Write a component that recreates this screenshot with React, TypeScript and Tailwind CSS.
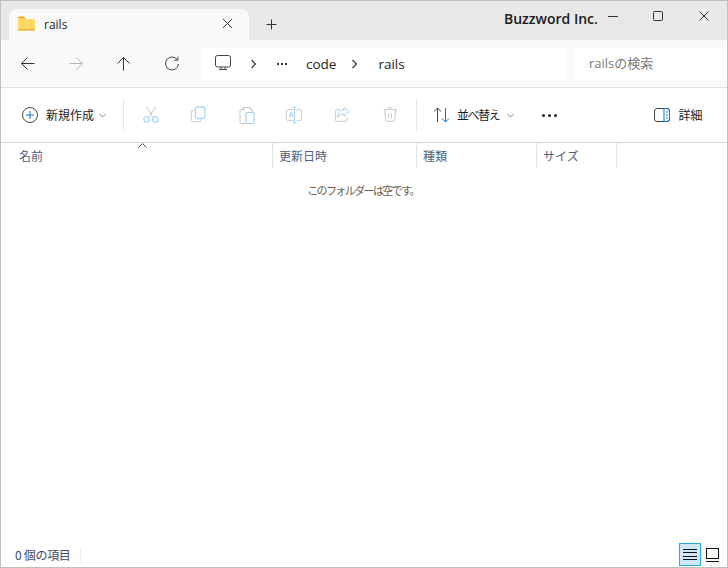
import type { ReactNode } from "react";

const font = "font-['Open_Sans','Noto_Sans_CJK_JP',sans-serif]";
const jp = "font-['Noto_Sans_CJK_JP',sans-serif]";
const GRAY = "#c4c4c4";
const BLUE = "#9fcff5";

function Svg({ size = 20, children }: { size?: number; children: ReactNode }) {
  return (
    <svg width={size} height={size} viewBox="0 0 20 20" fill="none" strokeWidth="1" className="shrink-0">
      {children}
    </svg>
  );
}

function NavArrow({ rotate, color }: { rotate: string; color: string }) {
  return (
    <div className={`flex h-5 w-5 items-center justify-center ${rotate}`}>
      <svg width="20" height="19" viewBox="0 0 20 19" fill="none" className="shrink-0">
        <path d="M3.500 9.500h13M9.500 3.500l-6 6 6 6" stroke={color} strokeWidth="1" />
      </svg>
    </div>
  );
}

function Chevron() {
  return (
    <svg width="8" height="10" viewBox="0 0 8 10" fill="none" className="shrink-0">
      <path d="M1.500 1l4 4-4 4" stroke="#333" strokeWidth="1.100" />
    </svg>
  );
}

function SmallDown() {
  return (
    <svg width="7" height="5" viewBox="0 0 7 5" fill="none" className="shrink-0">
      <path d="M.5 1l3 3 3-3" stroke="#888" />
    </svg>
  );
}

function Cut() {
  return (
    <Svg size={18}>
      <path d="M5 1l7 11M15 1L8 12" stroke={GRAY} strokeWidth="1.100" />
      <circle cx="5" cy="15" r="3" stroke={BLUE} strokeWidth="1.200" />
      <circle cx="15" cy="15" r="3" stroke={BLUE} strokeWidth="1.200" />
    </Svg>
  );
}

function Copy() {
  return (
    <Svg size={18}>
      <path d="M5 5H3.500A2 2 0 0 0 1.500 7v8a2.500 2.500 0 0 0 2.500 2.500h6a2 2 0 0 0 2-2V15" stroke={GRAY} />
      <rect x="6" y="1" width="10.500" height="13" rx="2.500" stroke={BLUE} strokeWidth="1.200" />
    </Svg>
  );
}

function Paste() {
  return (
    <Svg size={20}>
      <path d="M8 4.500H4.500a1.500 1.500 0 0 0-1.500 1.500v11a1.500 1.500 0 0 0 1.500 1.500h4M6 4V2.500h7V4M13 4.500h1a1.500 1.500 0 0 1 1.500 1.500v1" stroke={GRAY} />
      <rect x="9" y="7.500" width="8" height="11" rx="1.500" stroke={BLUE} strokeWidth="1.200" />
    </Svg>
  );
}

function Rename() {
  return (
    <Svg size={18}>
      <path d="M9 4H3.500A2 2 0 0 0 1.500 6v8a2 2 0 0 0 2 2H9M13 4h3.500a2 2 0 0 1 2 2v8a2 2 0 0 1-2 2H13" stroke={GRAY} />
      <path d="M8.500 1.500h4M8.500 18.500h4M10.500 1.500v17" stroke={BLUE} strokeWidth="1.100" />
      <path d="M4.500 13l2.500-6.500L9 12M5.500 11h3" stroke={BLUE} strokeWidth="1.100" />
    </Svg>
  );
}

function Share() {
  return (
    <Svg size={18}>
      <path d="M7 4H3.500A2 2 0 0 0 1.500 6v9a2 2 0 0 0 2 2h9a2 2 0 0 0 2-2v-2" stroke={GRAY} />
      <path d="M11 1.500l6 5-6 5V9C8 9 5.500 10 4 13c0-5 3-8.500 7-8.500z" stroke={BLUE} strokeWidth="1.100" />
    </Svg>
  );
}

function Trash() {
  return (
    <Svg size={18}>
      <path d="M1.500 4h15M7 4V2.500a1 1 0 0 1 1-1h2a1 1 0 0 1 1 1V4M3 4l1 11.500a2 2 0 0 0 2 1.500h6a2 2 0 0 0 2-1.500L15 4M7.500 8v5.500M10.500 8v5.500" stroke={GRAY} />
    </Svg>
  );
}

function Separator() {
  return <div className="h-[32px] w-px bg-[#e8e8e8]" />;
}

function Column({ width, label }: { width: string; label: string }) {
  return (
    <div className={`flex h-[25px] items-center border-r border-[#e2e2e2] pl-[6px] ${width}`}>
      <span className={`text-[12px] text-[#4c607a] ${jp}`}>{label}</span>
    </div>
  );
}

export default function App() {
  return (
    <div className={`flex h-[568px] w-[728px] flex-col overflow-hidden border border-[#bfbfbf] bg-white ${font}`}>
      {/* title bar */}
      <div className="flex h-[39px] shrink-0 items-end bg-[#e8e8e8] pl-[8px]">
        <div className="flex h-[31px] w-[240px] items-center rounded-t-[8px] bg-[#f9f9f9] pl-[9px]">
          <svg width="17" height="15" viewBox="0 0 17 15" className="shrink-0 -translate-y-px">
            <path d="M0 2a1.500 1.500 0 0 1 1.500-1.500h4.500l2 2H0z" fill="#eba800" />
            <rect x="0" y="3" width="17" height="11.500" rx="1.500" fill="#ffd966" />
            <rect x="0" y="13" width="17" height="1.500" rx=".7" fill="#e9b437" />
          </svg>
          <span className="ml-[9px] text-[12px] text-[#1b1b1b]">rails</span>
          <svg width="11" height="11" viewBox="0 0 11 11" className="ml-[155px] shrink-0 -translate-y-px" fill="none">
            <path d="M1 1l9 9M10 1l-9 9" stroke="#333" strokeWidth="1" />
          </svg>
        </div>
        <svg width="11" height="11" viewBox="0 0 11 11" className="mb-[10px] ml-[17px] shrink-0" fill="none">
          <path d="M5.500 .5v10M.5 5.500h10" stroke="#333" strokeWidth="1" />
        </svg>
        <span className="mb-[11px] ml-[227px] text-[14px] leading-[20px] font-semibold whitespace-nowrap text-[#1b1b1b]">
          Buzzword Inc.
        </span>
        <div className="mb-[19px] ml-[10px] flex items-center">
          <div className="h-px w-[10px] bg-[#333]" />
          <div className="ml-[35px] h-[10px] w-[10px] rounded-[1.500px] border border-[#333]" />
          <svg width="10" height="10" viewBox="0 0 10 10" className="ml-[36px]" fill="none">
            <path d="M.5.5l9 9M9.500.5l-9 9" stroke="#333" />
          </svg>
        </div>
      </div>

      {/* address bar */}
      <div className="flex h-[48px] shrink-0 items-center border-b border-[#e0e0e0] bg-[#f9f9f9] pl-[17px]">
        <NavArrow rotate="" color="#333" />
        <div className="ml-[28px]">
          <NavArrow rotate="rotate-180" color="#b5b5b5" />
        </div>
        <div className="ml-[28px]">
          <NavArrow rotate="rotate-90" color="#333" />
        </div>
        <div className="ml-[28px]">
          <Svg size={20}>
            <path d="M15.500 6A6.500 6.500 0 1 0 16.500 10" stroke="#444" />
            <path d="M12.500 6.200h3.400V2.800" stroke="#444" />
          </Svg>
        </div>
        <div className="ml-[20px] flex h-[32px] w-[364px] items-center rounded-[4px] bg-white pl-[13px] text-[13.500px] text-[#1b1b1b]">
          <svg width="17" height="17" viewBox="0 0 17 17" fill="none" className="shrink-0">
            <rect x=".5" y=".5" width="15" height="11.500" rx="2" stroke="#444" />
            <path d="M6 12v2M10 12v2M4 14.500h8" stroke="#444" />
          </svg>
          <div className="ml-[18px]">
            <Chevron />
          </div>
          <span className="ml-[19px] flex items-center gap-[2px]">
            <i className="h-[2px] w-[2px] bg-[#333]" />
            <i className="h-[2px] w-[2px] bg-[#333]" />
            <i className="h-[2px] w-[2px] bg-[#333]" />
          </span>
          <span className="ml-[19px] translate-y-px">code</span>
          <div className="ml-[15px]">
            <Chevron />
          </div>
          <span className="ml-[19px] translate-y-px">rails</span>
        </div>
        <div className={`ml-[8px] flex h-[32px] flex-1 items-center rounded-l-[4px] bg-white pl-[15px] text-[13px] text-[#7b7b7b] ${font}`}>
          railsの検索
        </div>
      </div>

      {/* command bar */}
      <div className="flex h-[55px] shrink-0 items-center border-b border-[#d6d6d6] bg-white">
        <div className="ml-[21px] flex h-[16px] w-[16px] items-center justify-center rounded-full border border-[#444]">
          <svg width="8" height="8" viewBox="0 0 8 8">
            <path d="M4 0v8M0 4h8" stroke="#0a78d4" strokeWidth="1" />
          </svg>
        </div>
        <span className={`ml-[8px] text-[12px] text-[#1b1b1b] ${jp}`}>新規作成</span>
        <div className="ml-[5px]">
          <SmallDown />
        </div>
        <div className="ml-[17px]">
          <Separator />
        </div>
        <div className="ml-[18px]"><Cut /></div>
        <div className="ml-[30px]"><Copy /></div>
        <div className="ml-[29px]"><Paste /></div>
        <div className="ml-[28px]"><Rename /></div>
        <div className="ml-[31px]"><Share /></div>
        <div className="ml-[30px]"><Trash /></div>
        <div className="ml-[16px]">
          <Separator />
        </div>
        <svg width="17" height="16" viewBox="0 0 17 16" fill="none" className="ml-[16px] shrink-0">
          <path d="M4.500 15V1M1 4.500L4.500 1 8 4.500" stroke="#444" />
          <path d="M12.500 1v14M9 11.500l3.500 3.500 3.500-3.500" stroke="#0a78d4" />
        </svg>
        <span className={`ml-[7px] text-[12px] tracking-[-1.400px] text-[#1b1b1b] ${jp}`}>並べ替え</span>
        <div className="ml-[8px]">
          <SmallDown />
        </div>
        <span className="ml-[28px] flex items-center gap-[3px]">
          <i className="h-[3px] w-[3px] rounded-full bg-[#222]" />
          <i className="h-[3px] w-[3px] rounded-full bg-[#222]" />
          <i className="h-[3px] w-[3px] rounded-full bg-[#222]" />
        </span>
        <svg width="16" height="14" viewBox="0 0 16 14" fill="none" className="ml-[97px] shrink-0">
          <rect x=".5" y=".5" width="15" height="13" rx="2.500" stroke="#444" />
          <path d="M10 .5h3a2.500 2.500 0 0 1 2.500 2.500v8a2.500 2.500 0 0 1-2.500 2.500h-3zM12 4h2M12 7h2M12 10h2" stroke="#0a78d4" />
        </svg>
        <span className={`ml-[8px] text-[12px] text-[#1b1b1b] ${jp}`}>詳細</span>
      </div>

      {/* column header */}
      <div className="relative flex shrink-0">
        <svg width="9" height="5" viewBox="0 0 9 5" fill="none" className="absolute top-[0px] left-[137px]">
          <path d="M.5 4.500l4-4 4 4" stroke="#555" />
        </svg>
        <div className="flex h-[25px] w-[272px] items-center border-r border-[#e2e2e2] pl-[18px]">
          <span className={`text-[12px] text-[#4c607a] ${jp}`}>名前</span>
        </div>
        <Column width="w-[144px]" label="更新日時" />
        <Column width="w-[120px]" label="種類" />
        <Column width="w-[80px]" label="サイズ" />
      </div>

      {/* empty list */}
      <div className="flex flex-1 justify-center pt-[13px] pr-[2px]">
        <span className={`text-[11px] leading-[18px] tracking-[-1.600px] text-[#6d5b4b] ${jp}`}>このフォルダーは空です。</span>
      </div>

      {/* status bar */}
      <div className="flex h-[25px] shrink-0 items-center">
        <span className={`ml-[14px] text-[12px] tracking-[-0.300px] text-[#3c4a63] ${jp}`}>0 個の項目</span>
        <div className="ml-[9px] h-[16px] w-px bg-[#eeeeee]" />
        <div className="ml-auto flex h-[23px] w-[22px] items-center justify-center border border-[#2ba6e8] bg-[#cde8f8]">
          <svg width="14" height="11" viewBox="0 0 14 11">
            <path d="M0 .5h14M0 3.500h14M0 7.500h14M0 10.500h14" stroke="#111" />
          </svg>
        </div>
        <div className="mr-[7px] ml-[3px] flex h-[22px] w-[16px] items-center justify-center bg-[#f9f9f9]">
          <svg width="13" height="14" viewBox="0 0 13 14" fill="none">
            <rect x=".5" y=".5" width="12" height="10" stroke="#111" />
            <path d="M0 13.500h13" stroke="#111" />
          </svg>
        </div>
      </div>
    </div>
  );
}
